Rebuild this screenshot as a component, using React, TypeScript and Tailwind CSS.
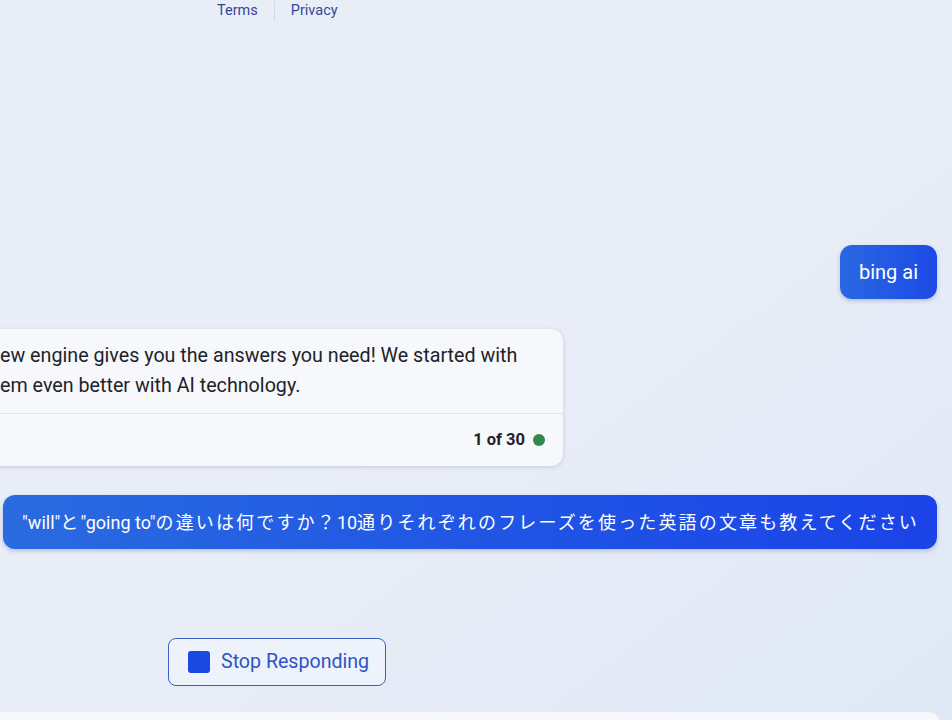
import React from "react";

const font = { fontFamily: 'Roboto, "Noto Sans CJK JP", "Noto Sans", sans-serif' };

function J({ children }: { children: React.ReactNode }) {
  return <span className="tracking-[2.15px]">{children}</span>;
}

export default function App() {
  return (
    <div
      className="relative h-[720px] w-[952px] overflow-hidden bg-gradient-to-br from-[#e9edf6] via-[#e9edf7] to-[#e0e8f6]"
      style={font}
    >
      {/* top links */}
      <div className="flex h-[22px] items-center pl-[217px] text-[14.5px] text-[#34479a]">
        <span>Terms</span>
        <span className="mx-4 h-[20px] w-px bg-[#d3d9e6]" />
        <span>Privacy</span>
      </div>

      <div className="flex flex-col">
        {/* bing ai bubble */}
        <div className="mt-[223px] flex justify-end pr-[15px]">
          <div className="flex h-[54px] items-center rounded-xl bg-gradient-to-r from-[#2a68e2] to-[#1d49e6] px-[19px] text-[20px] text-white shadow-[0_2px_4px_rgba(30,60,150,0.25)]">
            bing ai
          </div>
        </div>

        {/* response card */}
        <div className="mt-[30px] ml-[-30px] w-[593px] rounded-xl bg-[#f6f8fc] shadow-[0_1px_4px_rgba(40,60,110,0.18)]">
          <div className="pl-[30px] pr-4 pt-3 pb-3 text-[19.7px] leading-[30px] text-[#1f2328] whitespace-nowrap">
            <div>ew engine gives you the answers you need! We started with</div>
            <div>em even better with AI technology.</div>
          </div>
          <div className="flex h-[53px] items-center justify-end gap-[8px] border-t border-[#dfe3ea] pr-[18px]">
            <span className="text-[16.5px] font-bold text-[#1f2328]">1 of 30</span>
            <span className="h-[12px] w-[12px] rounded-full bg-[#2f8a4c]" />
          </div>
        </div>

        {/* japanese bubble */}
        <div className="mt-[29px] flex pl-[3px] pr-[15px]">
          <div className="flex h-[54px] w-full items-center rounded-xl bg-gradient-to-r from-[#2a6be0] via-[#2156e4] to-[#1b43e8] pl-[19px] text-[18px] text-white whitespace-nowrap shadow-[0_2px_4px_rgba(30,60,150,0.25)]">
            <span>"will"</span>
            <J>と</J>
            <span>"going to"</span>
            <J>の違いは何ですか？</J>
            <span>10</span>
            <J>通りそれぞれのフレーズを使った英語の文章も教えてください</J>
          </div>
        </div>

        {/* stop responding */}
        <div className="mt-[89px] pl-[168px]">
          <button className="flex h-[48px] items-center gap-[11px] rounded-lg border border-[#3a5fc9] bg-[#eef2fb] pl-[19px] pr-[16px] text-[19.6px] text-[#2d55c8]">
            <span className="h-[22px] w-[22px] rounded-[3px] bg-[#1b48e0]" />
            Stop Responding
          </button>
        </div>
      </div>

      {/* bottom input panel */}
      <div className="absolute left-0 top-[712px] h-[40px] w-[940px] rounded-tr-xl bg-[#f6f8fc]" />
    </div>
  );
}
